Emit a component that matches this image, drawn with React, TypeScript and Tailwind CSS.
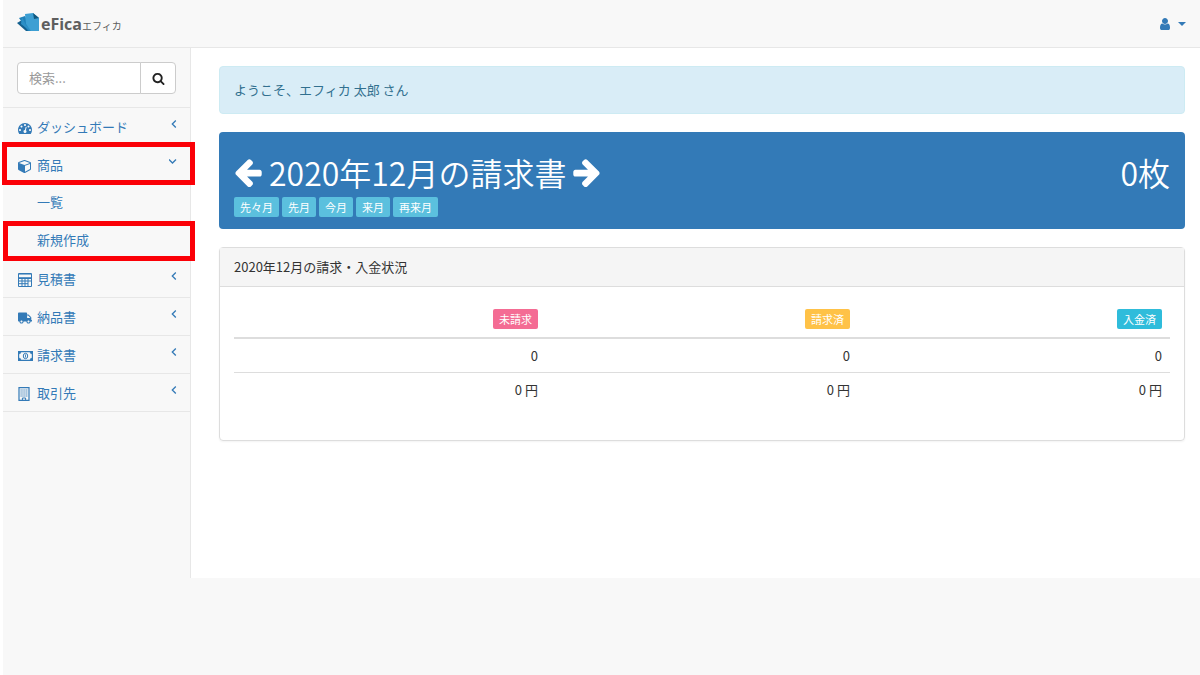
import { useState } from 'react';
import type { ReactNode } from 'react';
import { FaTruck } from 'react-icons/fa';

const PATHS = {
  arrowLeft:
    'M1664 896v128q0 53-32.5 90.5t-84.5 37.5h-704l293 294q38 36 38 90t-38 90l-75 76q-37 37-90 37-52 0-91-37l-651-652q-37-37-37-90 0-52 37-91l651-650q38-38 91-38 52 0 90 38l75 74q38 38 38 91t-38 91l-293 293h704q52 0 84.5 37.5t32.5 90.5z',
  arrowRight:
    'M1600 960q0 54-37 91l-651 651q-39 37-91 37-51 0-90-37l-75-75q-38-38-38-91t38-91l293-293h-704q-52 0-84.5-37.5t-32.5-90.5v-128q0-53 32.5-90.5t84.5-37.5h704l-293-294q-38-36-38-90t38-90l75-75q38-38 90-38 53 0 91 38l651 651q37 35 37 90z',
  dashboard:
    'M384 1152q0-53-37.5-90.5t-90.5-37.5-90.5 37.5-37.5 90.5 37.5 90.5 90.5 37.5 90.5-37.5 37.5-90.5zm192-448q0-53-37.5-90.5t-90.5-37.5-90.5 37.5-37.5 90.5 37.5 90.5 90.5 37.5 90.5-37.5 37.5-90.5zm428 481l101-382q6-26-7.5-48.5t-38.5-29.5-48 6.5-30 39.5l-101 382q-60 5-107 43.5t-63 98.5q-20 77 20 146t117 89 146-20 89-117q16-60-6-117t-72-91zm660-33q0-53-37.5-90.5t-90.5-37.5-90.5 37.5-37.5 90.5 37.5 90.5 90.5 37.5 90.5-37.5 37.5-90.5zm-640-640q0-53-37.5-90.5t-90.5-37.5-90.5 37.5-37.5 90.5 37.5 90.5 90.5 37.5 90.5-37.5 37.5-90.5zm448 192q0-53-37.5-90.5t-90.5-37.5-90.5 37.5-37.5 90.5 37.5 90.5 90.5 37.5 90.5-37.5 37.5-90.5zm320 448q0 261-141 483-19 29-54 29h-1402q-35 0-54-29-141-221-141-483 0-182 71-348t191-286 286-191 348-71 348 71 286 191 191 286 71 348z',
  cube: 'M896 1629l640-349v-636l-640 233v752zm-64-865l698-254-698-254-698 254zm832-252v768q0 35-18 65t-49 47l-704 384q-28 16-61 16t-61-16l-704-384q-31-17-49-47t-18-65v-768q0-40 23-73t61-47l704-256q22-8 44-8t44 8l704 256q38 14 61 47t23 73z',
  user: 'M1536 1399q0 109-62.5 187t-150.5 78h-854q-88 0-150.5-78t-62.5-187q0-85 8.5-160.5t31.5-152 58.5-131 94-89 134.5-34.5q131 128 313 128t313-128q76 0 134.5 34.5t94 89 58.5 131 31.5 152 8.5 160.5zm-256-887q0 159-112.5 271.5t-271.5 112.5-271.5-112.5-112.5-271.5 112.5-271.5 271.5-112.5 271.5 112.5 112.5 271.5z',
  search:
    'M1216 832q0-185-131.5-316.5t-316.5-131.5-316.5 131.5-131.5 316.5 131.5 316.5 316.5 131.5 316.5-131.5 131.5-316.5zm512 832q0 52-38 90t-90 38q-54 0-90-38l-343-342q-179 124-399 124-143 0-273.5-55.5t-225-150-150-225-55.5-273.5 55.5-273.5 150-225 225-150 273.5-55.5 273.5 55.5 225 150 150 225 55.5 273.5q0 220-124 399l343 343q37 37 37 90z',
};

function Glyph({ name, className }: { name: keyof typeof PATHS; className: string }) {
  return (
    <svg viewBox="0 0 1792 1792" fill="currentColor" aria-hidden="true" className={className}>
      <path d={PATHS[name]} />
    </svg>
  );
}

function CalculatorIcon() {
  return (
    <svg viewBox="0 0 14 14" fill="none" stroke="currentColor" aria-hidden="true" className="size-3.5">
      <path d="M.5.5h13v13H.5z" />
      <path d="M1 5.5h12M1 8h12M1 10.7h9M4 5v8M7 5v8M10 5v8" />
      <path d="M1 4.5h12M1 1.2h12" strokeWidth=".8" />
    </svg>
  );
}

function MoneyIcon() {
  return (
    <svg viewBox="0 0 15 12" fill="none" stroke="currentColor" aria-hidden="true" className="h-3 w-[15px]">
      <path d="M.6 1.6h13.8v8.8H.6z" strokeWidth="1.2" />
      <path d="M1 2h2q0 2-2 2zM14 2h-2q0 2 2 2zM1 10h2q0-2-2-2zM14 10h-2q0-2 2-2z" fill="currentColor" strokeWidth=".3" />
      <ellipse cx="7.5" cy="6" rx="2.2" ry="2.7" />
      <path d="M7.5 4.5v3" strokeWidth=".9" />
    </svg>
  );
}

function BuildingIcon() {
  return (
    <svg viewBox="0 0 12 14" fill="none" stroke="currentColor" aria-hidden="true" className="h-3.5 w-3">
      <path d="M1 .6h10v12.8H1z" strokeWidth="1.2" />
      <path d="M2.5 3h7M2.5 5h7M2.5 7h7M2.5 9h7" strokeDasharray="1.2 .7" />
      <path d="M4.4 13.5V11h3.2v2.5" />
    </svg>
  );
}

function Logo() {
  return (
    <svg viewBox="0 0 23 20" aria-hidden="true" className="mb-1 h-5 w-[23px]">
      <path d="M0 11l5-3 8 11H9z" fill="#14608f" />
      <path d="M2 6l6-2 8 15h-5z" fill="#1f80b8" />
      <path d="M5 5l4 8 7 6h-3L4 12z" fill="#2c8fc6" />
      <path d="M8 2l8-1 6 5v13h-8L9 12z" fill="#3d9fd3" />
      <path d="M16 1l6 5-5 1z" fill="#11587f" />
    </svg>
  );
}

interface MenuItem {
  label: string;
  icon: ReactNode;
  children?: string[];
}

const MENU: MenuItem[] = [
  { label: 'ダッシュボード', icon: <Glyph name="dashboard" className="size-3.5" /> },
  { label: '商品', icon: <Glyph name="cube" className="size-3.5" />, children: ['一覧', '新規作成'] },
  { label: '見積書', icon: <CalculatorIcon /> },
  { label: '納品書', icon: <FaTruck size={14} /> },
  { label: '請求書', icon: <MoneyIcon /> },
  { label: '取引先', icon: <BuildingIcon /> },
];

const MONTHS = ['先々月', '先月', '今月', '来月', '再来月'];

// 操作箇所を示す赤枠
function Marker({ className }: { className: string }) {
  return (
    <span
      className={`pointer-events-none absolute -right-[5px] -bottom-0.5 z-10 border-5 border-[#fb0007] ${className}`}
    />
  );
}

function Sidebar() {
  const [keyword, setKeyword] = useState('');

  return (
    <aside className="w-[188px] shrink-0 border-r border-[#e7e7e7]">
      <form className="flex border-b border-[#e7e7e7] px-3.5 pt-3.5 pb-[13px]" onSubmit={(e) => e.preventDefault()}>
        <input
          type="text"
          aria-label="検索"
          placeholder="検索..."
          value={keyword}
          onChange={(e) => setKeyword(e.target.value)}
          className="h-8 min-w-0 flex-1 rounded-l border border-[#ccc] bg-white px-[11px] pb-0.5 outline-none placeholder:text-[#999]"
        />
        <button
          type="submit"
          aria-label="検索する"
          className="-ml-px flex h-8 w-9 items-center justify-center rounded-r border border-[#ccc] bg-white text-[#222]"
        >
          <Glyph name="search" className="size-[13px]" />
        </button>
      </form>

      <nav>
        <ul>
          {MENU.map((item) => (
            <li key={item.label} className="border-b border-[#e7e7e7]">
              <a href="#" className="relative flex h-[37px] items-center pr-[11px] pl-[15px]">
                <span className="mt-0.5 flex w-[19px] shrink-0">{item.icon}</span>
                <span className="flex-1">{item.label}</span>
                <svg
                  viewBox="0 0 10 10"
                  fill="none"
                  stroke="currentColor"
                  strokeWidth="1.3"
                  aria-hidden="true"
                  className="mb-1.5 size-2.5"
                >
                  <path d={item.children ? 'M0 2.5l3.5 3.5L7 2.5' : 'M6.8 1.5L3.3 5l3.5 3.5'} />
                </svg>
                {item.children && <Marker className="-top-1 -left-px" />}
              </a>
              {item.children && (
                <ul>
                  {item.children.map((child) => (
                    <li key={child}>
                      <a href="#" className="relative flex h-[38px] items-center pl-[34px]">
                        {child}
                        {child === '新規作成' && <Marker className="top-0 left-0" />}
                      </a>
                    </li>
                  ))}
                </ul>
              )}
            </li>
          ))}
        </ul>
      </nav>
    </aside>
  );
}

export default function App() {
  return (
    <div className="min-h-screen border-l-3 border-white bg-[#f8f8f8] font-['Noto_Sans_CJK_JP',sans-serif] text-[13px] leading-5 text-[#333] [&_aside_a]:text-[#337ab7]">
      <header className="flex h-12 items-center justify-between border-b border-[#e7e7e7] pr-3.5 pl-3.5">
        <a href="#" className="flex items-center text-[#5e5e5e]">
          <Logo />
          <span className="ml-px font-['Open_Sans',sans-serif] text-[16px] font-bold">eFica</span>
          <span className="mt-1 text-[10px]">エフィカ</span>
        </a>
        <button type="button" aria-label="ユーザーメニュー" className="flex items-center gap-1.5 text-[#337ab7]">
          <Glyph name="user" className="size-3.5" />
          <svg viewBox="0 0 8 4" fill="currentColor" aria-hidden="true" className="h-1 w-2">
            <path d="M0 0h8L4 4z" />
          </svg>
        </button>
      </header>

      <div className="flex min-h-[530px]">
        <Sidebar />

        <main className="min-w-0 flex-1 bg-white pt-[18px] pr-[15px] pl-7">
          <div className="rounded border border-[#cdebf3] bg-[#d9edf7] px-3.5 py-[13px] text-[#31708f]">
            ようこそ、エフィカ 太郎 さん
          </div>

          <section className="mt-[18px] flex justify-between rounded bg-[#337ab7] px-[15px] pt-5 pb-3 text-white">
            <div>
              <h1 className="flex items-center gap-[5px] text-[32px] leading-10 font-[350]">
                <a href="#" aria-label="前の月">
                  <Glyph name="arrowLeft" className="-ml-0.5 size-8" />
                </a>
                <span>2020年12月の請求書</span>
                <a href="#" aria-label="次の月">
                  <Glyph name="arrowRight" className="size-8" />
                </a>
              </h1>
              <div className="mt-[5px] flex gap-[3px]">
                {MONTHS.map((m) => (
                  <a key={m} href="#" className="rounded-xs bg-[#5bc0de] px-1.5 text-[11px]">
                    {m}
                  </a>
                ))}
              </div>
            </div>
            <p className="text-[32px] leading-10 font-[350]">0枚</p>
          </section>

          <section className="mt-[18px] rounded border border-[#ddd] shadow-xs">
            <h2 className="border-b border-[#ddd] bg-[#f5f5f5] px-3.5 py-[9px]">2020年12月の請求・入金状況</h2>
            <div className="px-3.5 pt-3.5 pb-[34px]">
              <table className="w-full table-fixed border-collapse text-right">
                <thead>
                  <tr className="border-b-2 border-[#ddd]">
                    <th className="px-2 py-2 font-normal">
                      <span className="inline-block rounded-xs bg-[#f46c94] px-1.5 text-[11px] text-white">未請求</span>
                    </th>
                    <th className="px-2 py-2 font-normal">
                      <span className="inline-block rounded-xs bg-[#ffc247] px-1.5 text-[11px] text-white">請求済</span>
                    </th>
                    <th className="px-2 py-2 font-normal">
                      <span className="inline-block rounded-xs bg-[#2fbcdb] px-1.5 text-[11px] text-white">入金済</span>
                    </th>
                  </tr>
                </thead>
                <tbody>
                  <tr className="border-b border-[#ddd]">
                    <td className="px-2 pt-[7px] pb-1.5">0</td>
                    <td className="px-2 pt-[7px] pb-1.5">0</td>
                    <td className="px-2 pt-[7px] pb-1.5">0</td>
                  </tr>
                  <tr>
                    <td className="px-2 pt-[7px] pb-1.5">0 円</td>
                    <td className="px-2 pt-[7px] pb-1.5">0 円</td>
                    <td className="px-2 pt-[7px] pb-1.5">0 円</td>
                  </tr>
                </tbody>
              </table>
            </div>
          </section>
        </main>
      </div>
    </div>
  );
}
